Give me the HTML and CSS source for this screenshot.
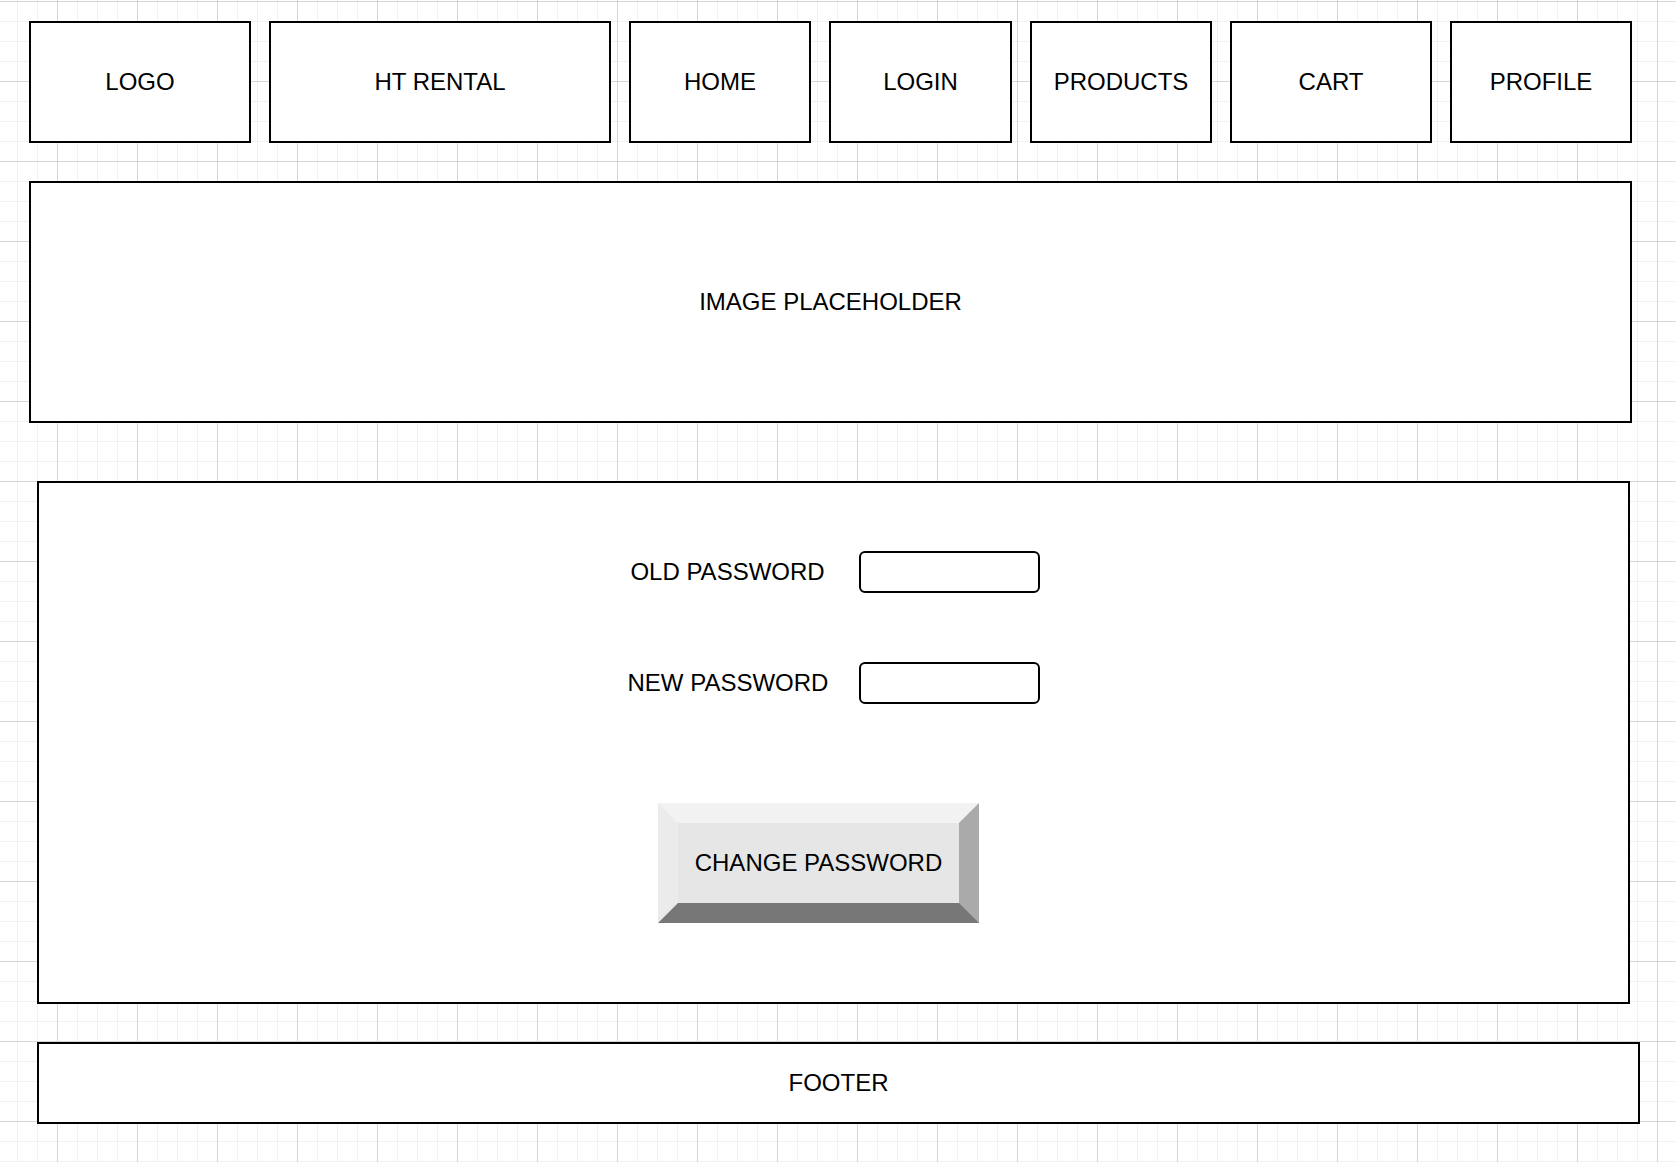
FILE: index.html
```html
<!DOCTYPE html>
<html lang="en">
<head>
<meta charset="utf-8">
<title>HT Rental - Change Password</title>
<link rel="stylesheet" href="styles.css">
</head>
<body>
<div class="page">
  <nav class="nav">
    <div class="box nav-logo">LOGO</div>
    <div class="box nav-title">HT RENTAL</div>
    <div class="box nav-item">HOME</div>
    <div class="box nav-item nav-login">LOGIN</div>
    <div class="box nav-item">PRODUCTS</div>
    <div class="box nav-item nav-cart">CART</div>
    <div class="box nav-item">PROFILE</div>
  </nav>
  <div class="box hero">IMAGE PLACEHOLDER</div>
  <form class="box form">
    <div class="row">
      <label class="label" for="old">OLD PASSWORD</label>
      <input class="field" id="old" type="password">
    </div>
    <div class="row row-second">
      <label class="label" for="new">NEW PASSWORD</label>
      <input class="field" id="new" type="password">
    </div>
    <div class="actions">
      <button class="bevel" type="button">CHANGE PASSWORD</button>
    </div>
  </form>
  <footer class="box footer">FOOTER</footer>
</div>
</body>
</html>
```
FILE: styles.css
```css
html {
  margin: 0;
  min-height: 100%;
  background-color: #ffffff;
  background-image:
    linear-gradient(to right, #d6d6d6 1px, transparent 1px),
    linear-gradient(to bottom, #d6d6d6 1px, transparent 1px),
    linear-gradient(to right, #f1f1f1 1px, transparent 1px),
    linear-gradient(to bottom, #f1f1f1 1px, transparent 1px);
  background-size: 80px 80px, 80px 80px, 20px 20px, 20px 20px;
  background-position: 57px 1px, 57px 1px, 17px 1px, 17px 1px;
}

body {
  margin: 0;
  font-family: "Liberation Sans", Arial, sans-serif;
  font-size: 24px;
  color: #000;
}

.page {
  display: flex;
  flex-direction: column;
  align-items: flex-start;
  padding-top: 21px;
  padding-bottom: 38px;
}

.box {
  box-sizing: border-box;
  border: 2px solid #000;
  background: #fff;
  display: flex;
  align-items: center;
  justify-content: center;
}

.nav {
  display: flex;
  gap: 18px;
  margin-left: 29px;
}

.nav .box {
  height: 122px;
}

.nav-logo { width: 222px; }
.nav-title { width: 342px; }
.nav-item { width: 182px; }
.nav-login { width: 183px; }
.nav-cart { width: 202px; }

.hero {
  margin-left: 29px;
  margin-top: 38px;
  width: 1603px;
  height: 242px;
}

.form {
  margin: 58px 0 0 37px;
  width: 1593px;
  height: 523px;
  flex-direction: column;
  justify-content: flex-start;
  align-items: stretch;
  padding: 68px 0 0 0;
}

.row {
  display: flex;
  align-items: center;
  justify-content: center;
  gap: 31px;
  height: 42px;
}

.row-second {
  margin-top: 69px;
}

.label {
  width: 200px;
  text-align: center;
  white-space: nowrap;
}

.field {
  box-sizing: border-box;
  width: 181px;
  height: 42px;
  margin: 0;
  padding: 0 8px;
  border: 2px solid #000;
  border-radius: 6px;
  background: #fff;
  font: inherit;
}

.actions {
  display: flex;
  justify-content: center;
  margin-top: 99px;
}

.bevel {
  box-sizing: border-box;
  width: 321px;
  height: 120px;
  margin: 0 30px 0 0;
  padding: 0;
  border-style: solid;
  border-width: 20px;
  border-top-color: #f2f2f2;
  border-left-color: #ebebeb;
  border-right-color: #aaaaaa;
  border-bottom-color: #777777;
  background: #e6e6e6;
  font: inherit;
  color: #000;
  white-space: nowrap;
}

.footer {
  margin: 38px 0 0 37px;
  width: 1603px;
  height: 82px;
}
```
